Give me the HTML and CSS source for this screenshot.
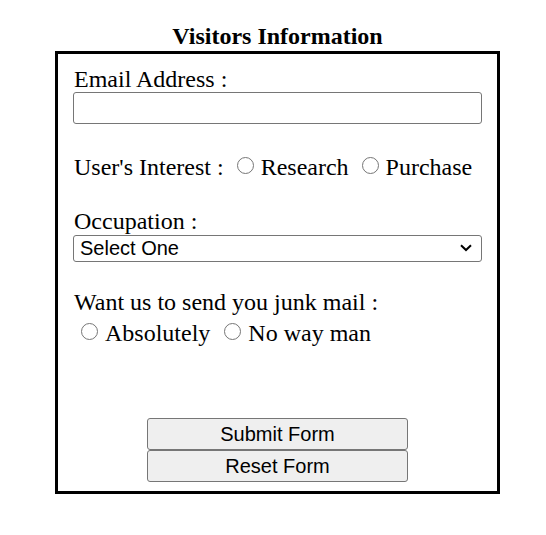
FILE: index.html
```html
<!DOCTYPE html>
<html>
<head>
<meta charset="utf-8">
<link rel="stylesheet" href="styles.css">
</head>
<body>
<div class="page">
  <h1 class="title">Visitors Information</h1>
  <form class="box">
    <label class="label" for="email">Email Address :</label>
    <input class="text-input" id="email" type="text">

    <div class="row interest">
      <span>User's Interest :</span>
      <input class="radio" type="radio" name="interest" id="r1"><label for="r1">Research</label>
      <input class="radio" type="radio" name="interest" id="r2"><label for="r2">Purchase</label>
    </div>

    <label class="label occ" for="occ">Occupation :</label>
    <div class="select-wrap">
      <select class="select" id="occ">
        <option>Select One</option>
      </select>
      <svg class="chevron" width="12" height="8" viewBox="0 0 12 8"><path d="M1 1.2 L6 6 L11 1.2" fill="none" stroke="#000" stroke-width="2"/></svg>
    </div>

    <div class="label junk">Want us to send you junk mail :</div>
    <div class="row junk-opts">
      <input class="radio" type="radio" name="junk" id="j1"><label for="j1">Absolutely</label>
      <input class="radio" type="radio" name="junk" id="j2"><label for="j2">No way man</label>
    </div>

    <div class="buttons">
      <button type="button" class="btn">Submit Form</button>
      <button type="button" class="btn">Reset Form</button>
    </div>
  </form>
</div>
</body>
</html>
```
FILE: styles.css
```css
* { box-sizing: border-box; }
html, body { margin: 0; padding: 0; background: #fff; }
body {
  font-family: "Liberation Serif", "Times New Roman", serif;
  font-size: 24px;
  color: #000;
}
.page {
  width: 445px;
  margin-left: 55px;
  padding-top: 23px;
}
.title {
  margin: 0;
  text-align: center;
  font-size: 24px;
  font-weight: bold;
  line-height: 27px;
  height: 28px;
}
.box {
  border: 3px solid #000;
  padding: 12px 15px 9px 15px;
  display: flex;
  flex-direction: column;
  height: 443px;
}
.label {
  display: block;
  line-height: 26px;
  padding-left: 1px;
}
.text-input {
  width: 409px;
  height: 32px;
  border: 1px solid #767676;
  border-radius: 3px;
  margin: 0;
}
.row {
  display: flex;
  align-items: center;
  line-height: 26px;
}
.interest {
  margin-top: 30px;
  padding-left: 1px;
}
.radio {
  appearance: none;
  -webkit-appearance: none;
  width: 17px;
  height: 17px;
  border: 1px solid #767676;
  border-radius: 50%;
  margin: 0 7px 0 0;
  background: #fff;
  position: relative;
  top: -2px;
  flex: none;
}
.interest span { margin-right: 13px; }
.interest label + .radio { margin-left: 13px; }
.occ { margin-top: 28px; }
.select-wrap {
  position: relative;
  width: 409px;
  height: 27px;
}
.select {
  appearance: none;
  -webkit-appearance: none;
  width: 409px;
  height: 27px;
  border: 1px solid #767676;
  border-radius: 3px;
  font-family: "Liberation Sans", Arial, sans-serif;
  font-size: 20px;
  padding: 0 6px;
  background: #fff;
  color: #000;
  margin: 0;
}
.chevron {
  position: absolute;
  right: 10px;
  top: 10px;
  pointer-events: none;
}
.junk { margin-top: 28px; }
.junk-opts {
  margin-top: 5px;
  padding-left: 8px;
}
.junk-opts label + .radio { margin-left: 14px; }
.buttons {
  margin-top: auto;
  display: flex;
  flex-direction: column;
  align-items: center;
}
.btn {
  width: 261px;
  height: 32px;
  margin: 0;
  border: 1px solid #767676;
  border-radius: 3px;
  background: #efefef;
  font-family: "Liberation Sans", Arial, sans-serif;
  font-size: 20px;
  color: #000;
  padding: 0;
}
```
